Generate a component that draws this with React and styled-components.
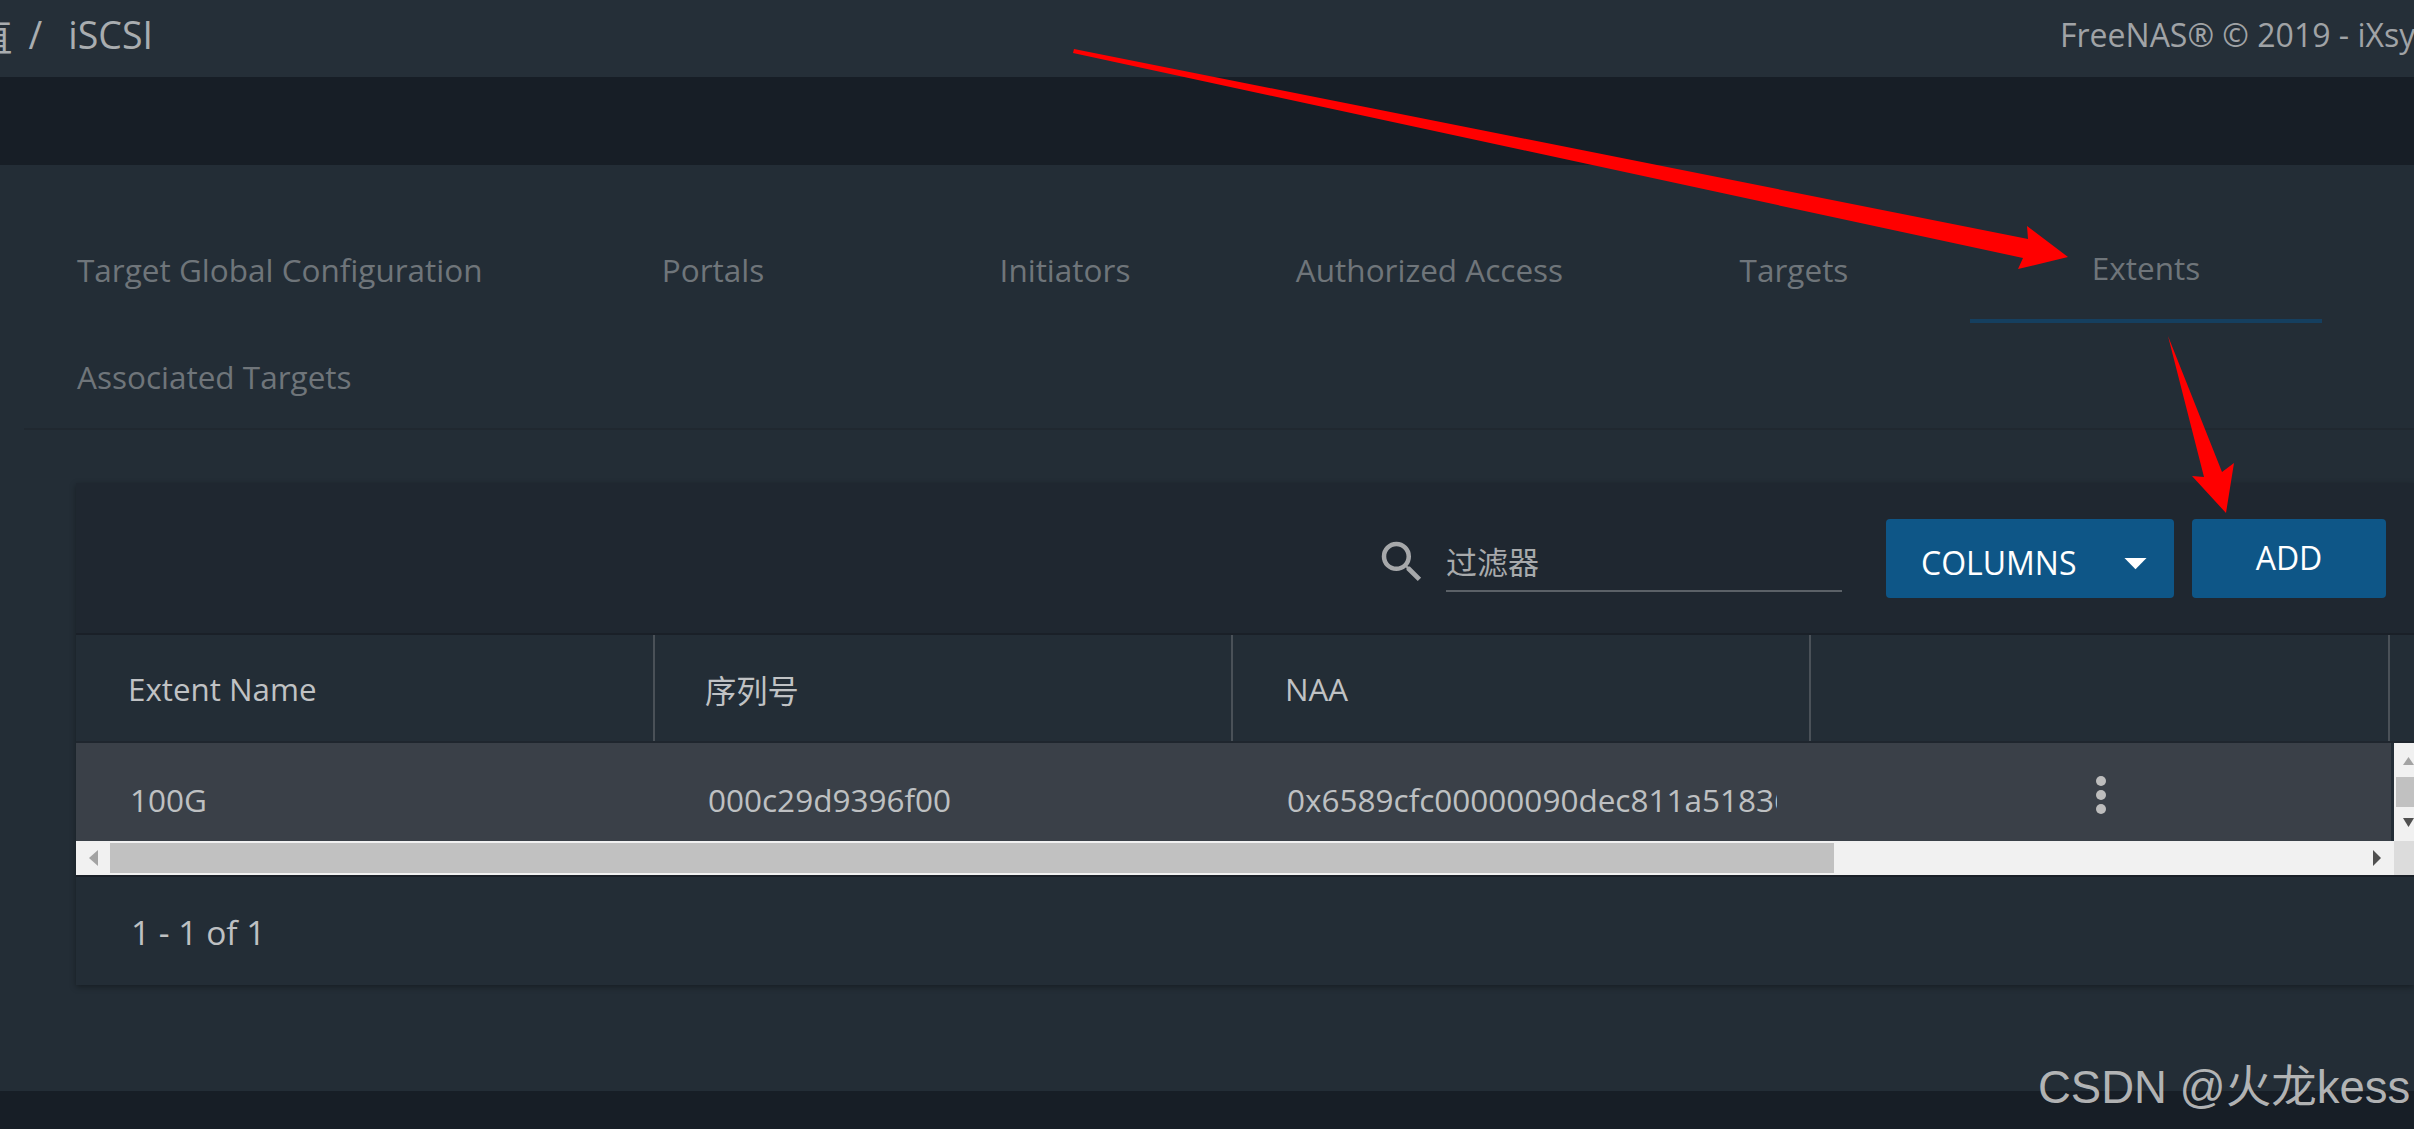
import React from 'react'
import styled, { createGlobalStyle } from 'styled-components'
import { MdSearch, MdArrowDropDown } from 'react-icons/md'

const GlobalStyle = createGlobalStyle`
  html, body {
    margin: 0;
    background: #171e26;
    overflow: hidden;
  }
  * { box-sizing: border-box; }
`

const FONT = `"Open Sans", "Noto Sans CJK SC", sans-serif`

const Page = styled.div`
  position: relative;
  width: 2414px;
  height: 1129px;
  overflow: hidden;
  font-family: ${FONT};
  background: #171e26;
`

const TopBar = styled.header`
  height: 77px;
  background: #252f38;
  display: grid;
  grid-template-columns: 1fr 354px;
  align-items: center;
  overflow: hidden;
`

const Crumbs = styled.div`
  display: flex;
  align-items: center;
  margin-left: -25px;
  padding-bottom: 8px;
  color: #a9adb0;
  font-size: 37.5px;
  gap: 16px;
`

const Current = styled.span`
  margin-left: 10px;
`

const Copyright = styled.div`
  white-space: nowrap;
  color: #a0a3a6;
  font-size: 32px;
  padding-bottom: 8px;
`

const Gutter = styled.div`
  height: 88px;
`

const Content = styled.main`
  height: 926px;
  background: #232d36;
  padding-top: 51px;
`

const Tabs = styled.nav`
  margin-left: 24px;
  display: flex;
  flex-wrap: wrap;
  border-bottom: 2px solid #202830;
  height: 214px;
`

const Tab = styled.div`
  height: 107px;
  width: ${p => p.$wide || 352}px;
  padding: 0 53px;
  display: flex;
  align-items: center;
  justify-content: ${p => (p.$first ? 'flex-start' : 'center')};
  font-size: 31.5px;
  color: #6f757a;
  border-bottom: ${p => (p.$active ? '4px solid #153f5f' : 'none')};
  white-space: nowrap;
`

const Card = styled.section`
  margin: 53px 0 0 76px;
  box-shadow: 0 2px 6px rgba(0, 0, 0, .35);
`

const Toolbar = styled.div`
  height: 150px;
  background: #1f2730;
  display: flex;
  align-items: flex-start;
  padding: 36px 28px 0 0;
  justify-content: flex-end;
`

const Filter = styled.div`
  display: flex;
  align-items: flex-start;
  margin-right: 44px;
  color: #a6a8aa;
  svg { margin: 16px 0 0 0; }
`

const FilterInput = styled.div`
  width: 396px;
  height: 73px;
  margin-left: 17px;
  border-bottom: 2px solid #5b6167;
  font-size: 31px;
  color: #a8aaac;
  padding-top: 23px;
  line-height: 40px;
`

const Button = styled.div`
  height: 79px;
  width: ${p => p.$width}px;
  margin-left: ${p => p.$gap || 0}px;
  background: #0e5687;
  border-radius: 4px;
  color: #fff;
  font-size: 32px;
  display: flex;
  align-items: center;
  justify-content: ${p => (p.$split ? 'space-between' : 'center')};
  padding: ${p => (p.$split ? '8px 12px 0 35px' : '0 0 2px')};
`

const HeadRow = styled.div`
  display: grid;
  grid-template-columns: 579px 578px 578px 579px 24px;
  height: 110px;
  background: #232d36;
  border-top: 2px solid #1a2028;
  border-bottom: 2px solid #1f262e;
  color: #c0c2c4;
  font-size: 31.3px;
`

const HeadCell = styled.div`
  height: 106px;
  padding: 2px 0 0 ${p => p.$pad}px;
  border-right: 2px solid ${p => (p.$plain ? 'transparent' : '#4a5158')};
  display: flex;
  align-items: center;
`

const BodyWrap = styled.div`
  display: flex;
  height: 98px;
`

const BodyRow = styled.div`
  display: grid;
  grid-template-columns: 579px 578px 578px 579px;
  align-items: center;
  width: 2318px;
  padding-top: 14px;
  background: #3a4048;
  border-right: 3px solid #232d36;
  color: #bec0c2;
  font-size: 31.5px;
`

const BodyCell = styled.div`
  padding-left: ${p => p.$pad}px;
  white-space: nowrap;
`

const ClippedText = styled.div`
  width: ${p => p.$width}px;
  overflow: hidden;
`

const Dots = styled.div`
  display: flex;
  flex-direction: column;
  align-items: center;
  gap: 4px;
  margin-top: -9px;
`

const Dot = styled.span`
  width: 10px;
  height: 10px;
  border-radius: 50%;
  background: #bdbdbd;
`

const VScroll = styled.div`
  width: 20px;
  background: #f1f1f1;
  display: flex;
  flex-direction: column;
  align-items: flex-end;
  padding-top: 14px;
`

const VThumb = styled.div`
  width: 18px;
  height: 30px;
  margin: 12px 0 11px;
  background: #c1c1c1;
`

const HScroll = styled.div`
  height: 34px;
  background: #f1f1f1;
  display: flex;
  align-items: stretch;
`

const ArrowSlot = styled.div`
  width: ${p => p.$width}px;
  display: flex;
  align-items: center;
  justify-content: ${p => p.$justify || 'center'};
  padding-right: ${p => p.$right || 0}px;
`

const HThumb = styled.div`
  width: 1724px;
  margin: 2px 0;
  background: #c1c1c1;
`

const Corner = styled.div`
  width: 20px;
  background: #dcdcdc;
`

const Footer = styled.div`
  height: 110px;
  background: #232d36;
  border-top: 2px solid #1a2028;
  display: flex;
  align-items: center;
  padding: 2px 0 0 55px;
  color: #bec0c2;
  font-size: 33.5px;
`

const BottomBar = styled.footer`
  height: 38px;
  background: #171e26;
`

const Annotations = styled.svg`
  position: absolute;
  left: 0;
  top: 0;
  pointer-events: none;
`

const Watermark = styled.div`
  position: absolute;
  left: 2038px;
  top: 1061px;
  white-space: nowrap;
  font-family: "Liberation Sans", "Noto Sans CJK SC", sans-serif;
  font-size: 45.5px;
  line-height: 54px;
  color: rgba(205, 205, 205, .85);
`

const Triangle = ({ w, h, fill, dir }) => {
  const points = {
    up: `0,${h} ${w / 2},0 ${w},${h}`,
    down: `0,0 ${w},0 ${w / 2},${h}`,
    left: `${w},0 0,${h / 2} ${w},${h}`,
    right: `0,0 ${w},${h / 2} 0,${h}`,
  }[dir]
  return (
    <svg width={w} height={h} viewBox={`0 0 ${w} ${h}`}>
      <polygon points={points} fill={fill} />
    </svg>
  )
}

function App() {
  const tabs = ['Portals', 'Initiators', 'Authorized Access', 'Targets']

  return (
    <Page>
      <GlobalStyle />
      <TopBar>
        <Crumbs>
          <span>直</span>
          <span>/</span>
          <Current>iSCSI</Current>
        </Crumbs>
        <Copyright>FreeNAS® © 2019 - iXsystems, Inc.</Copyright>
      </TopBar>
      <Gutter />
      <Content>
        <Tabs>
          <Tab $first $wide={513}>Target Global Configuration</Tab>
          {tabs.map(t => (
            <Tab key={t} $wide={t === 'Authorized Access' ? 377 : 352}>{t}</Tab>
          ))}
          <Tab $active>Extents</Tab>
          <Tab $first $wide={513}>Associated Targets</Tab>
        </Tabs>
        <Card>
          <Toolbar>
            <Filter>
              <MdSearch size={54} />
              <FilterInput>过滤器</FilterInput>
            </Filter>
            <Button $width={288} $split>
              COLUMNS
              <MdArrowDropDown size={53} />
            </Button>
            <Button $width={194} $gap={18}>ADD</Button>
          </Toolbar>
          <HeadRow>
            <HeadCell $pad={52}>Extent Name</HeadCell>
            <HeadCell $pad={50}>序列号</HeadCell>
            <HeadCell $pad={52}>NAA</HeadCell>
            <HeadCell />
            <HeadCell $plain />
          </HeadRow>
          <BodyWrap>
            <BodyRow>
              <BodyCell $pad={54}>100G</BodyCell>
              <BodyCell $pad={53}>000c29d9396f00</BodyCell>
              <BodyCell $pad={54}>
                <ClippedText $width={490}>0x6589cfc00000090dec811a51836f00</ClippedText>
              </BodyCell>
              <Dots>
                <Dot />
                <Dot />
                <Dot />
              </Dots>
            </BodyRow>
            <VScroll>
              <Triangle w={11} h={8} fill="#a3a3a3" dir="up" />
              <VThumb />
              <Triangle w={11} h={9} fill="#505050" dir="down" />
            </VScroll>
          </BodyWrap>
          <HScroll>
            <ArrowSlot $width={34}><Triangle w={9} h={16} fill="#a3a3a3" dir="left" /></ArrowSlot>
            <HThumb />
            <ArrowSlot $width={560} $justify="flex-end" $right={13}>
              <Triangle w={8} h={16} fill="#505050" dir="right" />
            </ArrowSlot>
            <Corner />
          </HScroll>
          <Footer>1 - 1 of 1</Footer>
        </Card>
      </Content>
      <BottomBar />
      <Annotations width="2414" height="1129" viewBox="0 0 2414 1129">
        <polygon fill="#ff0000" points="1074,49 2028,239 2027,226 2068,257 2018,269 2023,258 1073,53" />
        <polygon fill="#ff0000" points="2168,336 2222,472 2234,463 2226,513 2192,476 2204,477" />
      </Annotations>
      <Watermark>CSDN @火龙kess</Watermark>
    </Page>
  )
}

export default App
